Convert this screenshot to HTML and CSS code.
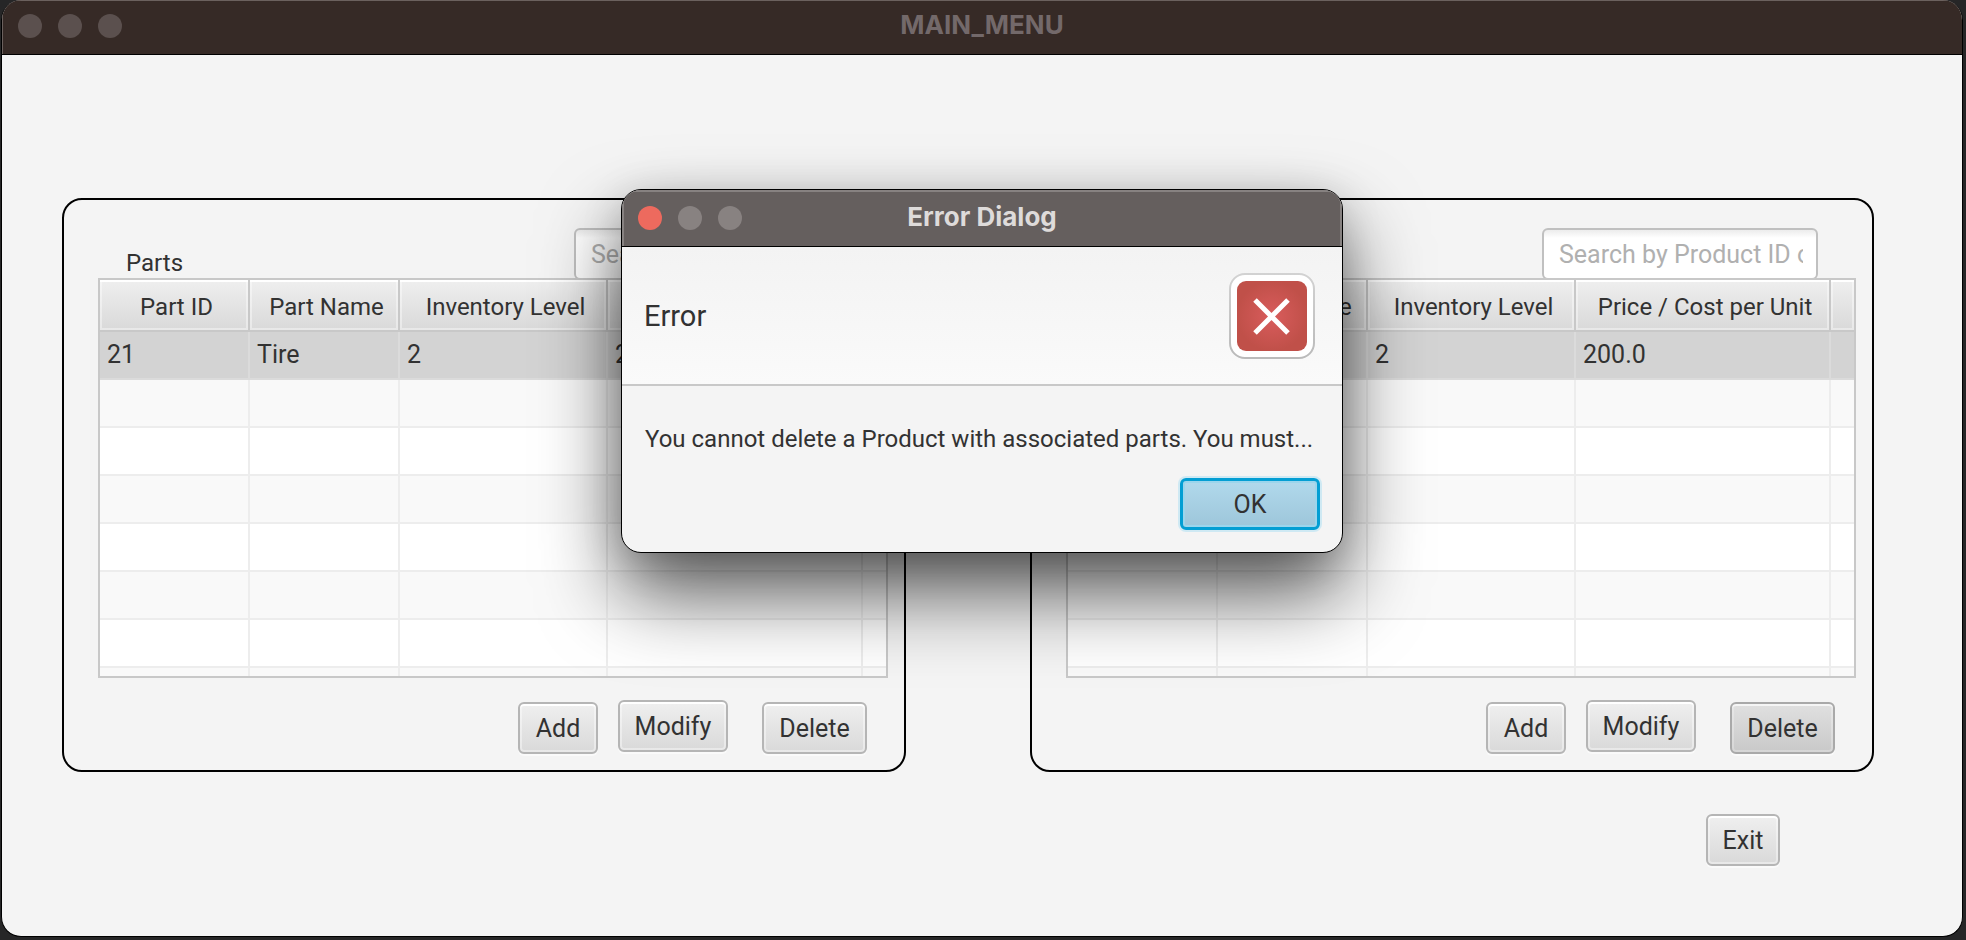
FILE: index.html
```html
<!DOCTYPE html>
<html lang="en">
<head>
<meta charset="utf-8">
<title>MAIN_MENU</title>
<link rel="stylesheet" href="styles.css">
</head>
<body>
<main class="window">
  <header class="titlebar">
    <span class="lights"><i class="light"></i><i class="light"></i><i class="light"></i></span>
    <h1 class="titlebar-text">MAIN_MENU</h1>
  </header>
  <div class="content">
    <div class="panels">
      <section class="panel">
        <div class="panel-head">
          <h2 class="panel-title">Parts</h2>
          <input class="search" type="text" aria-label="Search parts" placeholder="Search by Part ID or Name">
        </div>
        <div class="table-box">
          <table class="table">
            <colgroup><col class="c-id"><col class="c-name"><col class="c-level"><col class="c-price"><col></colgroup>
            <thead><tr><th>Part ID</th><th>Part Name</th><th>Inventory Level</th><th>Price / Cost per Unit</th><th></th></tr></thead>
            <tbody>
              <tr class="selected"><td>21</td><td>Tire</td><td>2</td><td>200.0</td><td></td></tr>
              <tr><td></td><td></td><td></td><td></td><td></td></tr>
              <tr><td></td><td></td><td></td><td></td><td></td></tr>
              <tr><td></td><td></td><td></td><td></td><td></td></tr>
              <tr><td></td><td></td><td></td><td></td><td></td></tr>
              <tr><td></td><td></td><td></td><td></td><td></td></tr>
              <tr><td></td><td></td><td></td><td></td><td></td></tr>
              <tr><td></td><td></td><td></td><td></td><td></td></tr>
            </tbody>
          </table>
        </div>
        <div class="actions">
          <button class="btn btn-add" type="button">Add</button>
          <button class="btn btn-modify" type="button">Modify</button>
          <button class="btn btn-delete" type="button">Delete</button>
        </div>
      </section>
      <section class="panel">
        <div class="panel-head">
          <h2 class="panel-title">Products</h2>
          <input class="search" type="text" aria-label="Search products" placeholder="Search by Product ID or Name">
        </div>
        <div class="table-box">
          <table class="table">
            <colgroup><col class="c-id"><col class="c-name"><col class="c-level"><col class="c-price"><col></colgroup>
            <thead><tr><th>Part ID</th><th>Part Name</th><th>Inventory Level</th><th>Price / Cost per Unit</th><th></th></tr></thead>
            <tbody>
              <tr class="selected"><td></td><td></td><td>2</td><td>200.0</td><td></td></tr>
              <tr><td></td><td></td><td></td><td></td><td></td></tr>
              <tr><td></td><td></td><td></td><td></td><td></td></tr>
              <tr><td></td><td></td><td></td><td></td><td></td></tr>
              <tr><td></td><td></td><td></td><td></td><td></td></tr>
              <tr><td></td><td></td><td></td><td></td><td></td></tr>
              <tr><td></td><td></td><td></td><td></td><td></td></tr>
              <tr><td></td><td></td><td></td><td></td><td></td></tr>
            </tbody>
          </table>
        </div>
        <div class="actions">
          <button class="btn btn-add" type="button">Add</button>
          <button class="btn btn-modify" type="button">Modify</button>
          <button class="btn btn-delete btn-pressed" type="button">Delete</button>
        </div>
      </section>
    </div>
    <div class="footer"><button class="btn btn-exit" type="button">Exit</button></div>
  </div>

  <div class="overlay">
    <div class="dialog" role="dialog" aria-labelledby="dialog-title">
      <header class="titlebar dialog-bar">
        <span class="lights"><i class="light light-close"></i><i class="light"></i><i class="light"></i></span>
        <h2 class="titlebar-text" id="dialog-title">Error Dialog</h2>
      </header>
      <div class="dialog-header">
        <span class="dialog-heading">Error</span>
        <svg class="error-icon" viewBox="0 0 86 86" aria-hidden="true">
          <defs>
            <radialGradient id="red"><stop offset="0" stop-color="#d95c5c"/><stop offset="1" stop-color="#c05049"/></radialGradient>
            <linearGradient id="rim" x2="0" y2="1"><stop offset="0" stop-color="#d2d2d2"/><stop offset="1" stop-color="#bababa"/></linearGradient>
          </defs>
          <rect x="1" y="1" width="84" height="84" rx="15" fill="#fff" stroke="url(#rim)" stroke-width="2"/>
          <rect x="8" y="8" width="70" height="70" rx="9" fill="url(#red)"/>
          <path d="M26 27 59 60M59 27 26 60" stroke="#fff" stroke-width="5"/>
        </svg>
      </div>
      <p class="dialog-text">You cannot delete a Product with associated parts. You must...</p>
      <div class="dialog-actions"><button class="btn btn-ok" type="button">OK</button></div>
    </div>
  </div>
</main>
</body>
</html>
```
FILE: styles.css
```css
* { box-sizing: border-box; }

body {
  margin: 0;
  padding: 0 3px 3px 1px;
  min-height: 100vh;
  display: flex;
  background: #262627;
  color: #323232;
  font: 25px/30px Roboto, "Liberation Sans", sans-serif;
}

h1, h2, p { margin: 0; }

.window {
  position: relative;
  flex: 1;
  display: flex;
  flex-direction: column;
  border: 1px solid #000;
  border-top: 0;
  border-radius: 20px;
  background: #f4f4f4;
  overflow: hidden;
}

.titlebar {
  position: relative;
  display: flex;
  align-items: center;
  justify-content: center;
  height: 55px;
  padding-bottom: 4px;
  border-bottom: 1px solid #000;
  background: #362a26;
  box-shadow: inset 1px 1px 0 #6b615e;
}

.titlebar-text {
  font: 700 26px/30px Inter, "Liberation Sans", sans-serif;
  color: #73696a;
}

.lights {
  position: absolute;
  left: 16px;
  top: 14px;
  display: flex;
  gap: 16px;
}

.light {
  width: 24px;
  height: 24px;
  border-radius: 50%;
  background: #5b504e;
}

.content { padding: 143px 88px 0 60px; }

.panels {
  display: grid;
  grid-template-columns: 1fr 1fr;
  gap: 124px;
}

.panel {
  border: 2px solid #000;
  border-radius: 20px;
  padding: 28px 16px 16px 34px;
}

.panel-head {
  display: flex;
  justify-content: space-between;
  align-items: flex-end;
  padding: 0 38px 0 28px;
}

.panel-title {
  font-size: 24px;
  line-height: 30px;
  font-weight: 400;
}

.search {
  width: 276px;
  height: 52px;
  margin-bottom: -2px;
  padding: 0 13px 0 15px;
  border: 2px solid #c0c0c0;
  border-radius: 6px;
  background: linear-gradient(#ececec, #fff 8px);
  font: inherit;
  color: #323232;
}

.search::placeholder { color: #b0b0b0; opacity: 1; }

.table-box {
  position: relative;
  height: 400px;
  border: 2px solid #c8c8c8;
  background: #fff;
  overflow: hidden;
}

.table {
  width: 100%;
  table-layout: fixed;
  border-collapse: separate;
  border-spacing: 0;
}

.c-id, .c-name { width: 150px; }
.c-level { width: 208px; }
.c-price { width: 255px; }

.table th {
  height: 52px;
  padding: 3px 0 0 5px;
  border: solid #c8c8c8;
  border-width: 0 2px 2px 0;
  background: linear-gradient(#efefef, #d9d9d9);
  box-shadow: inset 0 0 0 2px rgba(255, 255, 255, 0.4), inset 0 2px 0 #fff;
  font-size: 24px;
  font-weight: 400;
  white-space: nowrap;
}

.table td {
  height: 48px;
  padding: 0 7px;
  border: solid #ededed;
  border-width: 0 2px 2px 0;
}

.table th:last-child, .table td:last-child { border-right: 0; }
.table tbody tr:nth-child(even) { background: #f9f9f9; }
.table .selected { background: #d3d3d3; }
.table .selected td { border-color: #dbdbdb; }

.actions {
  display: flex;
  padding: 22px 21px 0 0;
  justify-content: flex-end;
}

.btn {
  height: 52px;
  padding: 2px 0 0;
  border: 2px solid #b5b5b5;
  border-radius: 6px;
  background: linear-gradient(#efefef, #d9d9d9);
  box-shadow: inset 0 0 0 2px rgba(255, 255, 255, 0.4), inset 0 2px 0 #fff, 0 2px 0 #fafafa;
  font: inherit;
  color: #323232;
}

.actions .btn { margin-top: 2px; }
.btn-add { width: 80px; }
.actions .btn-modify { width: 110px; margin: 0 34px 2px 20px; }
.btn-delete { width: 105px; }
.btn-pressed {
  border-color: #a9a9a9;
  background: linear-gradient(#e0e0e0, #c9c9c9);
  box-shadow: inset 0 0 0 2px rgba(255, 255, 255, 0.25), inset 0 2px 0 #f2f2f2, 0 2px 0 #fafafa;
}

.footer {
  display: flex;
  justify-content: flex-end;
  padding: 42px 94px 0 0;
}

.btn-exit { width: 74px; }

.overlay {
  position: absolute;
  inset: 0;
  display: flex;
  justify-content: center;
  align-items: flex-start;
  padding-top: 189px;
}

.dialog {
  width: 722px;
  border: 1px solid #000;
  border-radius: 20px;
  background: #f4f4f4;
  overflow: hidden;
  box-shadow: 0 40px 80px rgba(0, 0, 0, 0.65), 0 8px 40px rgba(0, 0, 0, 0.15);
}

.dialog-bar {
  height: 57px;
  padding-bottom: 2px;
  background: #655f5e;
  box-shadow: inset 0 2px 0 #878281, inset 2px 0 0 #878281, inset -2px 0 0 #878281;
}

.dialog-bar .titlebar-text { color: #dedbda; }
.dialog-bar .lights { top: 16px; }
.dialog-bar .light { background: #888281; }
.dialog-bar .light-close { background: #ed6a5e; }

.dialog-header {
  display: flex;
  align-items: center;
  justify-content: space-between;
  height: 139px;
  padding: 0 27px 0 22px;
  border-bottom: 2px solid #c8c8c8;
  background: linear-gradient(#f3f3f3, #fafafa);
}

.dialog-heading { font-size: 29px; line-height: 36px; }
.error-icon { width: 86px; height: 86px; }

.dialog-text {
  padding: 38px 0 24px 23px;
  font-size: 24px;
  white-space: nowrap;
}

.dialog-actions {
  display: flex;
  justify-content: flex-end;
  padding: 0 22px 22px 0;
}

.btn-ok {
  width: 140px;
  border: 3px solid #039ed3;
  background: linear-gradient(#b1d9ec, #9dc6da);
  box-shadow: inset 0 0 0 2px #9bd5ec, 0 0 0 2px #cfe9f3;
}
```
